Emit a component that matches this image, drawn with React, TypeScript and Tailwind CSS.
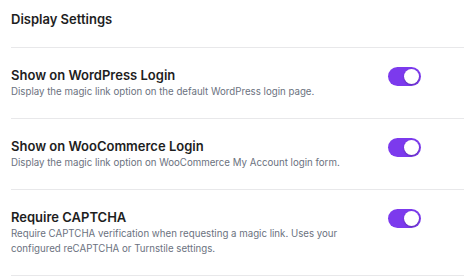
import React from 'react';

interface ToggleRowProps {
  title: string;
  description: string;
  enabled: boolean;
  onToggle: () => void;
}

const Toggle: React.FC<{ enabled: boolean; onToggle: () => void }> = ({ enabled, onToggle }) => (
  <button
    onClick={onToggle}
    className={`relative shrink-0 w-[33px] h-[19px] rounded-full transition-colors ${
      enabled ? 'bg-[#7c3aed]' : 'bg-gray-300'
    }`}
  >
    <span
      className={`absolute top-[2px] w-[15px] h-[15px] rounded-full bg-white shadow-[0_1px_2px_rgba(0,0,0,0.25)] transition-all ${
        enabled ? 'left-[16px]' : 'left-[2px]'
      }`}
    />
  </button>
);

const ToggleRow: React.FC<ToggleRowProps> = ({ title, description, enabled, onToggle }) => (
  <div className="flex items-start justify-between border-t border-[#e8e8ea] pt-[19px] pb-[19px] pr-[43px]">
    <div className="max-w-[345px]">
      <div className="text-[13px] leading-[16px] font-semibold text-[#1e1e1e]">{title}</div>
      <div className="text-[9.7px] leading-[15px] text-[#6b7280] mt-[1px]">{description}</div>
    </div>
    <Toggle enabled={enabled} onToggle={onToggle} />
  </div>
);

export default function App() {
  const [settings, setSettings] = React.useState({ wp: true, woo: true, captcha: true });

  return (
    <div className="w-[464px] h-[277px] overflow-hidden bg-white pl-[11px] font-['Inter',sans-serif]">
      <div className="pt-[10px] pb-[19px] text-[13px] leading-[18px] font-semibold text-[#1e1e1e]">
        Display Settings
      </div>
      <ToggleRow
        title="Show on WordPress Login"
        description="Display the magic link option on the default WordPress login page."
        enabled={settings.wp}
        onToggle={() => setSettings({ ...settings, wp: !settings.wp })}
      />
      <ToggleRow
        title="Show on WooCommerce Login"
        description="Display the magic link option on WooCommerce My Account login form."
        enabled={settings.woo}
        onToggle={() => setSettings({ ...settings, woo: !settings.woo })}
      />
      <ToggleRow
        title="Require CAPTCHA"
        description="Require CAPTCHA verification when requesting a magic link. Uses your configured reCAPTCHA or Turnstile settings."
        enabled={settings.captcha}
        onToggle={() => setSettings({ ...settings, captcha: !settings.captcha })}
      />
      <div className="border-t border-[#e8e8ea]" />
    </div>
  );
}
